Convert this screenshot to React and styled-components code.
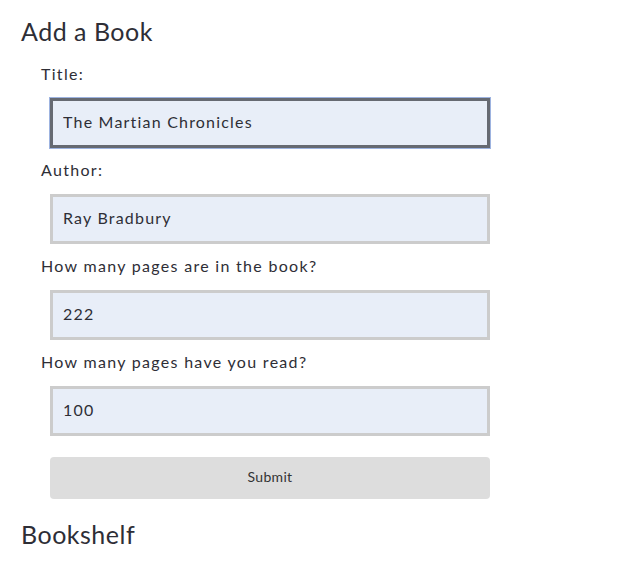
import React, { useState } from 'react'
import styled, { createGlobalStyle } from 'styled-components'

const GlobalStyle = createGlobalStyle`
  body {
    margin: 0;
    background: #fff;
    font-family: Lato, "Noto Sans", sans-serif;
    color: #2e2e36;
  }
`;

const Page = styled.div`
  padding: 0 21px;
`;

const Heading = styled.h2`
  margin: 0;
  font-size: 25px;
  font-weight: 400;
  letter-spacing: 0.5px;
  line-height: 30px;
  padding-top: ${p => p.$top || 16}px;
`;

const Form = styled.form`
  display: flex;
  flex-direction: column;
  padding-top: 16px;
`;

const Label = styled.label`
  display: block;
  padding-left: 20px;
  font-size: 16px;
  letter-spacing: 1.3px;
  line-height: 24px;
`;

const Input = styled.input`
  display: block;
  box-sizing: border-box;
  width: 440px;
  height: 50px;
  margin: 12px 0 10px 29px;
  padding: 0 10px 3px;
  border: 3px solid #ccc;
  background: #e8eef8;
  font-family: inherit;
  font-size: 16px;
  letter-spacing: 1.2px;
  color: #2e2e36;
  outline: none;
  &:focus {
    border-color: #666a72;
    box-shadow: 0 0 0 1px #9db3e0;
  }
`;

const Submit = styled.button`
  width: 440px;
  height: 42px;
  margin: 11px 0 0 29px;
  padding: 0 0 3px;
  border: none;
  border-radius: 4px;
  background: #ddd;
  color: #333;
  font-family: inherit;
  font-size: 14px;
  letter-spacing: 0.3px;
`;

const fields = [
  { name: 'title', label: 'Title:', value: 'The Martian Chronicles' },
  { name: 'author', label: 'Author:', value: 'Ray Bradbury' },
  { name: 'pages', label: 'How many pages are in the book?', value: '222' },
  { name: 'read', label: 'How many pages have you read?', value: '100' },
];

export default function App() {
  const [values, setValues] = useState(
    Object.fromEntries(fields.map(f => [f.name, f.value]))
  );

  return (
    <Page>
      <GlobalStyle />
      <Heading>Add a Book</Heading>
      <Form onSubmit={e => e.preventDefault()}>
        {fields.map((f, i) => (
          <React.Fragment key={f.name}>
            <Label htmlFor={f.name}>{f.label}</Label>
            <Input
              id={f.name}
              value={values[f.name]}
              autoFocus={i === 0}
              onChange={e => setValues({ ...values, [f.name]: e.target.value })}
            />
          </React.Fragment>
        ))}
        <Submit type="submit">Submit</Submit>
      </Form>
      <Heading $top={20}>Bookshelf</Heading>
    </Page>
  )
}
